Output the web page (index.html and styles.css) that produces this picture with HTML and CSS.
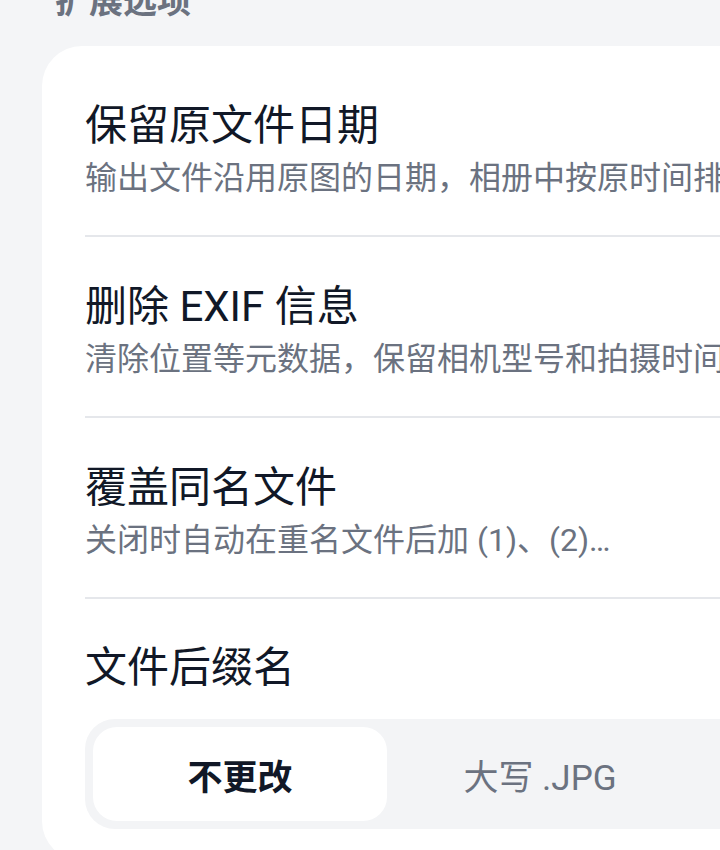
FILE: index.html
```html
<!DOCTYPE html>
<html lang="zh-CN">
<head>
<meta charset="utf-8">
<title>扩展选项</title>
<link rel="stylesheet" href="styles.css">
</head>
<body>
<div class="page">
  <h2 class="section-title">扩展选项</h2>
  <div class="card">
    <div class="row">
      <div class="row-title">保留原文件日期</div>
      <div class="row-sub">输出文件沿用原图的日期，相册中按原时间排序</div>
    </div>
    <div class="row">
      <div class="row-title">删除 EXIF 信息</div>
      <div class="row-sub">清除位置等元数据，保留相机型号和拍摄时间</div>
    </div>
    <div class="row">
      <div class="row-title">覆盖同名文件</div>
      <div class="row-sub">关闭时自动在重名文件后加 (1)、(2)…</div>
    </div>
    <div class="row row-last">
      <div class="row-title">文件后缀名</div>
      <div class="segment">
        <div class="seg-btn seg-active">不更改</div>
        <div class="seg-btn">大写 .JPG</div>
        <div class="seg-btn">小写 .jpg</div>
      </div>
    </div>
  </div>
</div>
</body>
</html>
```
FILE: styles.css
```css
html, body {
  margin: 0;
  padding: 0;
  width: 720px;
  height: 850px;
  overflow: hidden;
  background: #f4f5f7;
  font-family: Roboto, "Noto Sans CJK SC", sans-serif;
}

.page {
  width: 900px;
  padding-left: 42px;
  margin-top: -16px;
}

.section-title {
  margin: 0 0 28px 13px;
  font-size: 34px;
  line-height: 34px;
  font-weight: 700;
  color: #6b7280;
}

.card {
  background: #ffffff;
  border-radius: 40px;
  padding: 10px 0 32px 43px;
}

.row {
  padding: 42px 0 35px;
  border-bottom: 2px solid #e5e7eb;
}

.row-title {
  font-size: 42px;
  line-height: 56px;
  color: #111827;
  white-space: nowrap;
}

.row-sub {
  margin-top: 2px;
  font-size: 32px;
  line-height: 44px;
  color: #6b7280;
  white-space: nowrap;
}

.row-last {
  padding: 41px 0 0;
  border-bottom: none;
}

.segment {
  margin-top: 23px;
  display: flex;
  gap: 6px;
  padding: 8px;
  background: #f3f4f6;
  border-radius: 30px;
}

.seg-btn {
  flex: 0 0 294px;
  height: 94px;
  border-radius: 24px;
  display: flex;
  align-items: center;
  justify-content: center;
  font-size: 35px;
  color: #6b7280;
}

.seg-active {
  background: #ffffff;
  color: #111827;
  font-weight: 700;
}
```
